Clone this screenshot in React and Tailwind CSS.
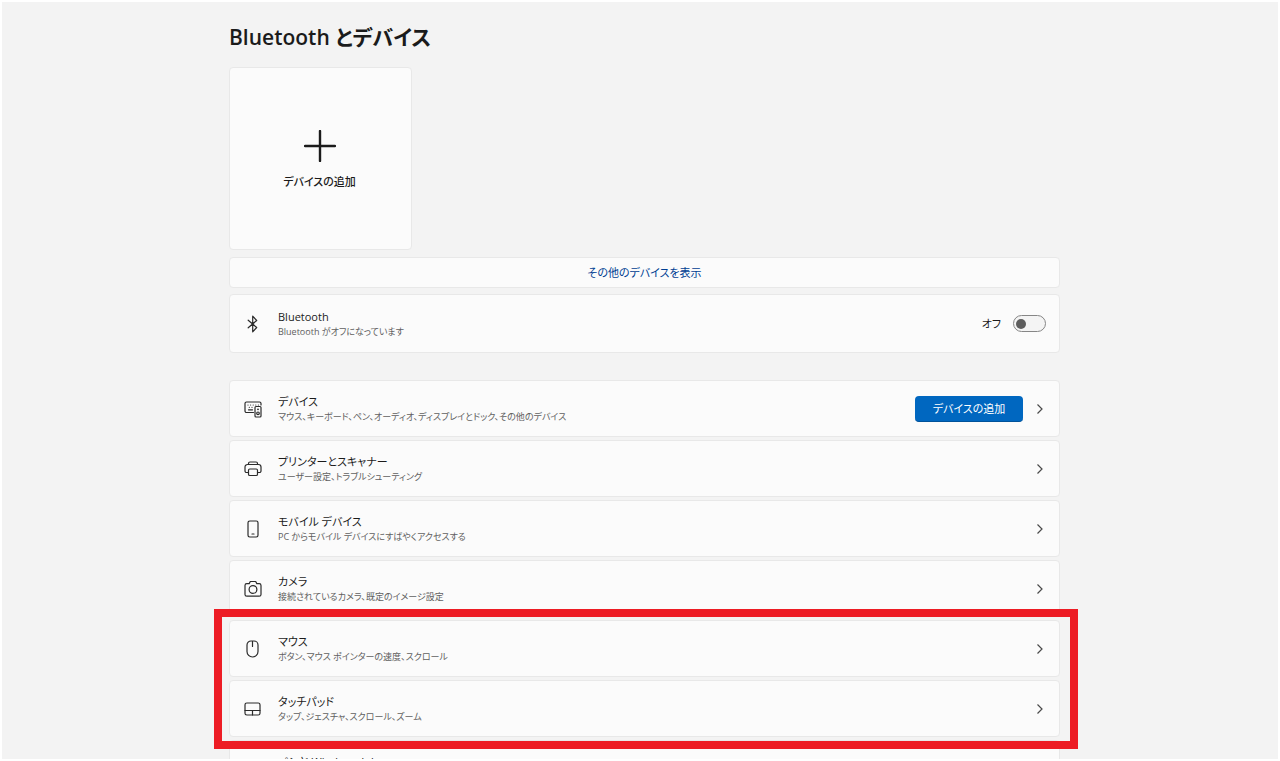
import { useState } from 'react';

const rows = [
  { title: 'プリンターとスキャナー', text: 'ユーザー設定、トラブルシューティング', Icon: PrinterIcon },
  { title: 'モバイル デバイス', text: 'PC からモバイル デバイスにすばやくアクセスする', Icon: PhoneIcon },
  { title: 'カメラ', text: '接続されているカメラ、既定のイメージ設定', Icon: CameraIcon },
];

const highlightedRows = [
  { title: 'マウス', text: 'ボタン、マウス ポインターの速度、スクロール', Icon: MouseIcon },
  { title: 'タッチパッド', text: 'タップ、ジェスチャ、スクロール、ズーム', Icon: TouchpadIcon },
];

function Icon({ children }) {
  return (
    <svg
      className="w-[18px] h-[18px] shrink-0"
      viewBox="0 0 18 18"
      fill="none"
      stroke="#2b2b2b"
      strokeWidth="1.2"
      strokeLinecap="round"
      strokeLinejoin="round"
      aria-hidden="true"
    >
      {children}
    </svg>
  );
}

function BluetoothIcon() {
  return (
    <Icon>
      <path d="M4.2 5.2 12.7 12.5 8.700 16.8V1.2l4 4.300-8.500 7.300" />
    </Icon>
  );
}

function DevicesIcon() {
  return (
    <Icon>
      <path d="M9.500 12.500H2.500A1.500 1.500 0 0 1 1 11V3.500A1.500 1.500 0 0 1 2.500 2h13A1.500 1.500 0 0 1 17 3.500V5" />
      <path d="M4 5h.01M6.600 5h.01M9.200 5h.01M11.800 5h.01M14.400 5h.01M5.300 7.300h.01M8 7.300h.01M4.500 9.800h4" />
      <rect x="11" y="6.500" width="6" height="10.500" rx="1" />
      <circle cx="14" cy="13.300" r="1.300" />
      <path d="M14 9.300h.01" strokeWidth="1.800" />
    </Icon>
  );
}

function PrinterIcon() {
  return (
    <Icon>
      <path d="M4.500 4.500V3.500A1.500 1.500 0 0 1 6 2h6a1.500 1.500 0 0 1 1.500 1.500v1" />
      <path d="M4.500 12.500H2.500A1.500 1.500 0 0 1 1 11V7a2.500 2.500 0 0 1 2.500-2.500h11A2.500 2.500 0 0 1 17 7v4a1.500 1.500 0 0 1-1.500 1.500h-2" />
      <rect x="4.500" y="9" width="9" height="6.500" rx="1.300" />
    </Icon>
  );
}

function PhoneIcon() {
  return (
    <Icon>
      <rect x="4" y="1" width="10" height="16" rx="1.700" />
      <path d="M8 14h2" />
    </Icon>
  );
}

function CameraIcon() {
  return (
    <Icon>
      <path d="M6.300 1.500h5.400l1.100 2.100h2.400A1.800 1.800 0 0 1 17 5.400v9a1.800 1.800 0 0 1-1.800 1.800H2.800A1.800 1.800 0 0 1 1 14.400v-9a1.800 1.800 0 0 1 1.800-1.800h2.400z" />
      <circle cx="9" cy="9.500" r="3.900" />
    </Icon>
  );
}

function MouseIcon() {
  return (
    <Icon>
      <path d="M3 5a4 4 0 0 1 4-4h3a4 4 0 0 1 4 4v6.500a5.500 5.500 0 0 1-11 0zM8.500 1v5.500" />
    </Icon>
  );
}

function TouchpadIcon() {
  return (
    <Icon>
      <rect x="1" y="3" width="15" height="12" rx="1.800" />
      <path d="M1 10.500h15M8.500 10.500V15" />
    </Icon>
  );
}

function PenIcon() {
  return (
    <Icon>
      <path d="M2 16l1-4L13 2l3 3L6 15z" />
    </Icon>
  );
}

function Chevron() {
  return (
    <svg className="w-3 h-3 shrink-0" viewBox="0 0 12 12" fill="none" stroke="#4a4a4a" strokeWidth="1.200" aria-hidden="true">
      <path d="M3.500 1.500 8 6l-4.500 4.500" />
    </svg>
  );
}

function RowText({ title, text }) {
  return (
    <span className="flex flex-col min-w-0">
      <span className="text-[11px] leading-[15px] text-[#1b1b1b]">{title}</span>
      <span className="text-[9px] leading-[15px] text-[#606060]">{text}</span>
    </span>
  );
}

function LinkRow({ row }) {
  return (
    <a
      href="#"
      className="flex items-center gap-4 h-[57px] shrink-0 pl-[14px] pr-[13px] rounded-sm border border-[#e8e8e8] bg-[#fbfbfb]"
    >
      <row.Icon />
      <RowText title={row.title} text={row.text} />
      <span className="ml-auto">
        <Chevron />
      </span>
    </a>
  );
}

export default function App() {
  const [enabled, setEnabled] = useState(false);

  return (
    <div
      lang="ja"
      className="h-screen overflow-hidden border-2 border-white bg-[#f3f3f3] pl-[9px] text-[#1b1b1b] font-['Open_Sans','Noto_Sans_CJK_JP',sans-serif] [font-feature-settings:'palt']"
    >
      <main className="flex flex-col w-full max-w-[831px] mx-auto pt-5">
        <h1 className="text-[21px] leading-[30px] font-semibold">Bluetooth とデバイス</h1>

        <button className="flex flex-col items-center justify-center gap-3 w-[183px] h-[183px] mt-[15px] pt-0.5 pr-0.5 rounded-sm border border-[#e8e8e8] bg-[#fbfbfb]">
          <svg className="w-8 h-8" viewBox="0 0 32 32" stroke="#1b1b1b" strokeWidth="2.400" strokeLinecap="round" aria-hidden="true">
            <path d="M16 1v30M1 16h30" />
          </svg>
          <span className="text-[11px] leading-[15px] font-medium">デバイスの追加</span>
        </button>

        <button className="h-[31px] mt-[7px] rounded-sm border border-[#e8e8e8] bg-[#fbfbfb] text-[11px] leading-[15px] text-[#003e92]">
          その他のデバイスを表示
        </button>

        <label className="flex items-center gap-4 h-[59px] mt-[6px] pl-[14px] pr-[13px] rounded-sm border border-[#e8e8e8] bg-[#fbfbfb]">
          <BluetoothIcon />
          <RowText title="Bluetooth" text="Bluetooth がオフになっています" />
          <span className="ml-auto text-[11px] leading-[15px]">{enabled ? 'オン' : 'オフ'}</span>
          <input
            type="checkbox"
            role="switch"
            aria-label="Bluetooth"
            checked={enabled}
            onChange={(e) => setEnabled(e.target.checked)}
            className="appearance-none flex items-center w-[33px] h-[17px] -ml-1 px-[2px] rounded-full border border-[#868686] bg-[#f4f4f4] before:w-[10px] before:h-[10px] before:rounded-full before:bg-[#5d5d5d] checked:justify-end checked:bg-[#0067c0] checked:before:bg-white"
          />
        </label>

        <div className="flex flex-col gap-[3px] mt-[27px]">
          <div className="flex items-center gap-4 h-[57px] pl-[14px] pr-[13px] rounded-sm border border-[#e8e8e8] bg-[#fbfbfb]">
            <DevicesIcon />
            <RowText title="デバイス" text="マウス、キーボード、ペン、オーディオ、ディスプレイとドック、その他のデバイス" />
            <div className="flex items-center gap-[11px] ml-auto">
              <button className="w-[108px] h-[26px] rounded-sm border-b border-[#00529a] bg-[#0067c0] text-[11px] leading-[15px] text-white">
                デバイスの追加
              </button>
              <button aria-label="デバイス">
                <Chevron />
              </button>
            </div>
          </div>

          {rows.map((row) => (
            <LinkRow key={row.title} row={row} />
          ))}

          <div className="relative flex flex-col gap-[3px]">
            {highlightedRows.map((row) => (
              <LinkRow key={row.title} row={row} />
            ))}
            <div className="absolute z-10 -top-[11px] -bottom-3 -left-[15px] -right-[18px] border-8 border-[#ed1c24] pointer-events-none" />
          </div>

          <LinkRow row={{ title: 'ペンと Windows Ink', text: '右利きまたは左利き、ペンのボタンのショートカット、手書き', Icon: PenIcon }} />
        </div>
      </main>
    </div>
  );
}
